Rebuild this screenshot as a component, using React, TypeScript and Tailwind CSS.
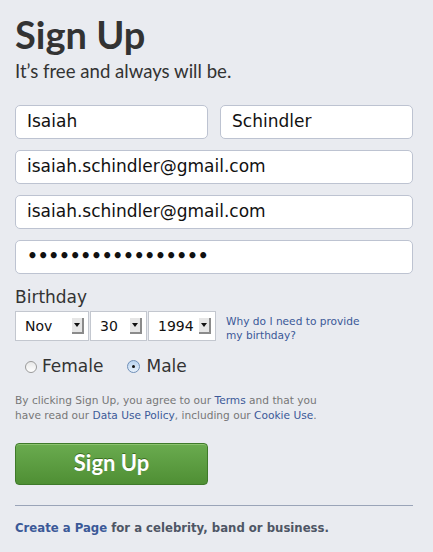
import React from "react";

const body = { fontFamily: '"DejaVu Sans", "Liberation Sans", sans-serif' };
const display = { fontFamily: 'Lato, "Open Sans", sans-serif' };

function TextBox({ value, className = "" }: { value: string; className?: string }) {
  return (
    <div
      className={`flex h-[34px] items-center rounded-[5px] border border-[#bdc3d1] bg-white pl-[11px] text-[17px] text-[#111] ${className}`}
    >
      {value}
    </div>
  );
}

function SelectBox({ value, width }: { value: string; width: string }) {
  return (
    <div className={`flex h-[30px] items-center justify-between border border-[#c3c7cf] bg-white pl-[9px] pr-[4px] text-[14px] text-[#111] ${width}`}>
      <span>{value}</span>
      <span className="flex h-[16px] w-[12px] items-center justify-center border-b-2 border-r-2 border-b-[#8b8b8b] border-r-[#8b8b8b] bg-[#e6e6e6]">
        <span className="h-0 w-0 border-x-[3px] border-t-[4px] border-x-transparent border-t-[#111]" />
      </span>
    </div>
  );
}

export default function App() {
  return (
    <div className="min-h-[552px] w-[433px] bg-[#e9ebf0] pl-[15px] pr-[20px] pt-[12px]" style={body}>
      <h1 className="text-[38px] font-bold leading-[44px] text-[#333]" style={display}>
        Sign Up
      </h1>
      <p className="mt-[4px] text-[18.6px] leading-[22px] text-[#333]" style={display}>
        It’s free and always will be.
      </p>

      <div className="mt-[23px] flex flex-col gap-[11px]">
        <div className="flex gap-[12px]">
          <TextBox value="Isaiah" className="flex-1" />
          <TextBox value="Schindler" className="flex-1" />
        </div>
        <TextBox value="isaiah.schindler@gmail.com" />
        <TextBox value="isaiah.schindler@gmail.com" />
        <TextBox value="•••••••••••••••••" className="font-bold tracking-[-0.2px]" />
      </div>

      <div className="mt-[12px] text-[17px] leading-[22px] text-[#333]">Birthday</div>
      <div className="mt-[3px] flex items-start">
        <div className="flex gap-[1px]">
          <SelectBox value="Nov" width="w-[74px]" />
          <SelectBox value="30" width="w-[57px]" />
          <SelectBox value="1994" width="w-[68px]" />
        </div>
        <a className="ml-[10px] mt-[3px] text-[10.6px] leading-[14px] text-[#3b5998]">
          Why do I need to provide
          <br />
          my birthday?
        </a>
      </div>

      <div className="mt-[12px] flex items-center pl-[10px] text-[17px] text-[#333]">
        <label className="flex items-center gap-[5px]">
          <span className="h-[12px] w-[12px] rounded-full border border-[#9a9a9a] bg-gradient-to-b from-[#e8e8e8] to-white" />
          <span>Female</span>
        </label>
        <label className="ml-[24px] flex items-center gap-[6px]">
          <span className="flex h-[13px] w-[13px] items-center justify-center rounded-full border border-[#6f8fb8] bg-gradient-to-b from-[#b9d3ef] to-[#e8f1fb]">
            <span className="h-[3px] w-[3px] rounded-full bg-[#111]" />
          </span>
          <span>Male</span>
        </label>
      </div>

      <p className="mt-[13px] text-[10.6px] leading-[15px] text-[#777]">
        By clicking Sign Up, you agree to our <a className="text-[#3b5998]">Terms</a> and that you
        <br />
        have read our <a className="text-[#3b5998]">Data Use Policy</a>, including our{" "}
        <a className="text-[#3b5998]">Cookie Use</a>.
      </p>

      <button
        type="button"
        className="mt-[20px] flex h-[42px] w-[193px] items-center justify-center rounded-[4px] border border-[#3f7a2a] bg-gradient-to-b from-[#6aab4f] to-[#4f8f34] pb-[2px] text-[22px] font-bold text-white shadow-[inset_0_1px_0_#8cc36f] [text-shadow:0_-1px_0_#3b6e22]"
        style={display}
      >
        Sign Up
      </button>

      <div className="mt-[20px] border-t border-[#9aa4b8]" />

      <p className="mt-[14px] text-[11.7px] font-bold text-[#4e5665]">
        <a className="text-[#3b5998]">Create a Page</a> for a celebrity, band or business.
      </p>
    </div>
  );
}
